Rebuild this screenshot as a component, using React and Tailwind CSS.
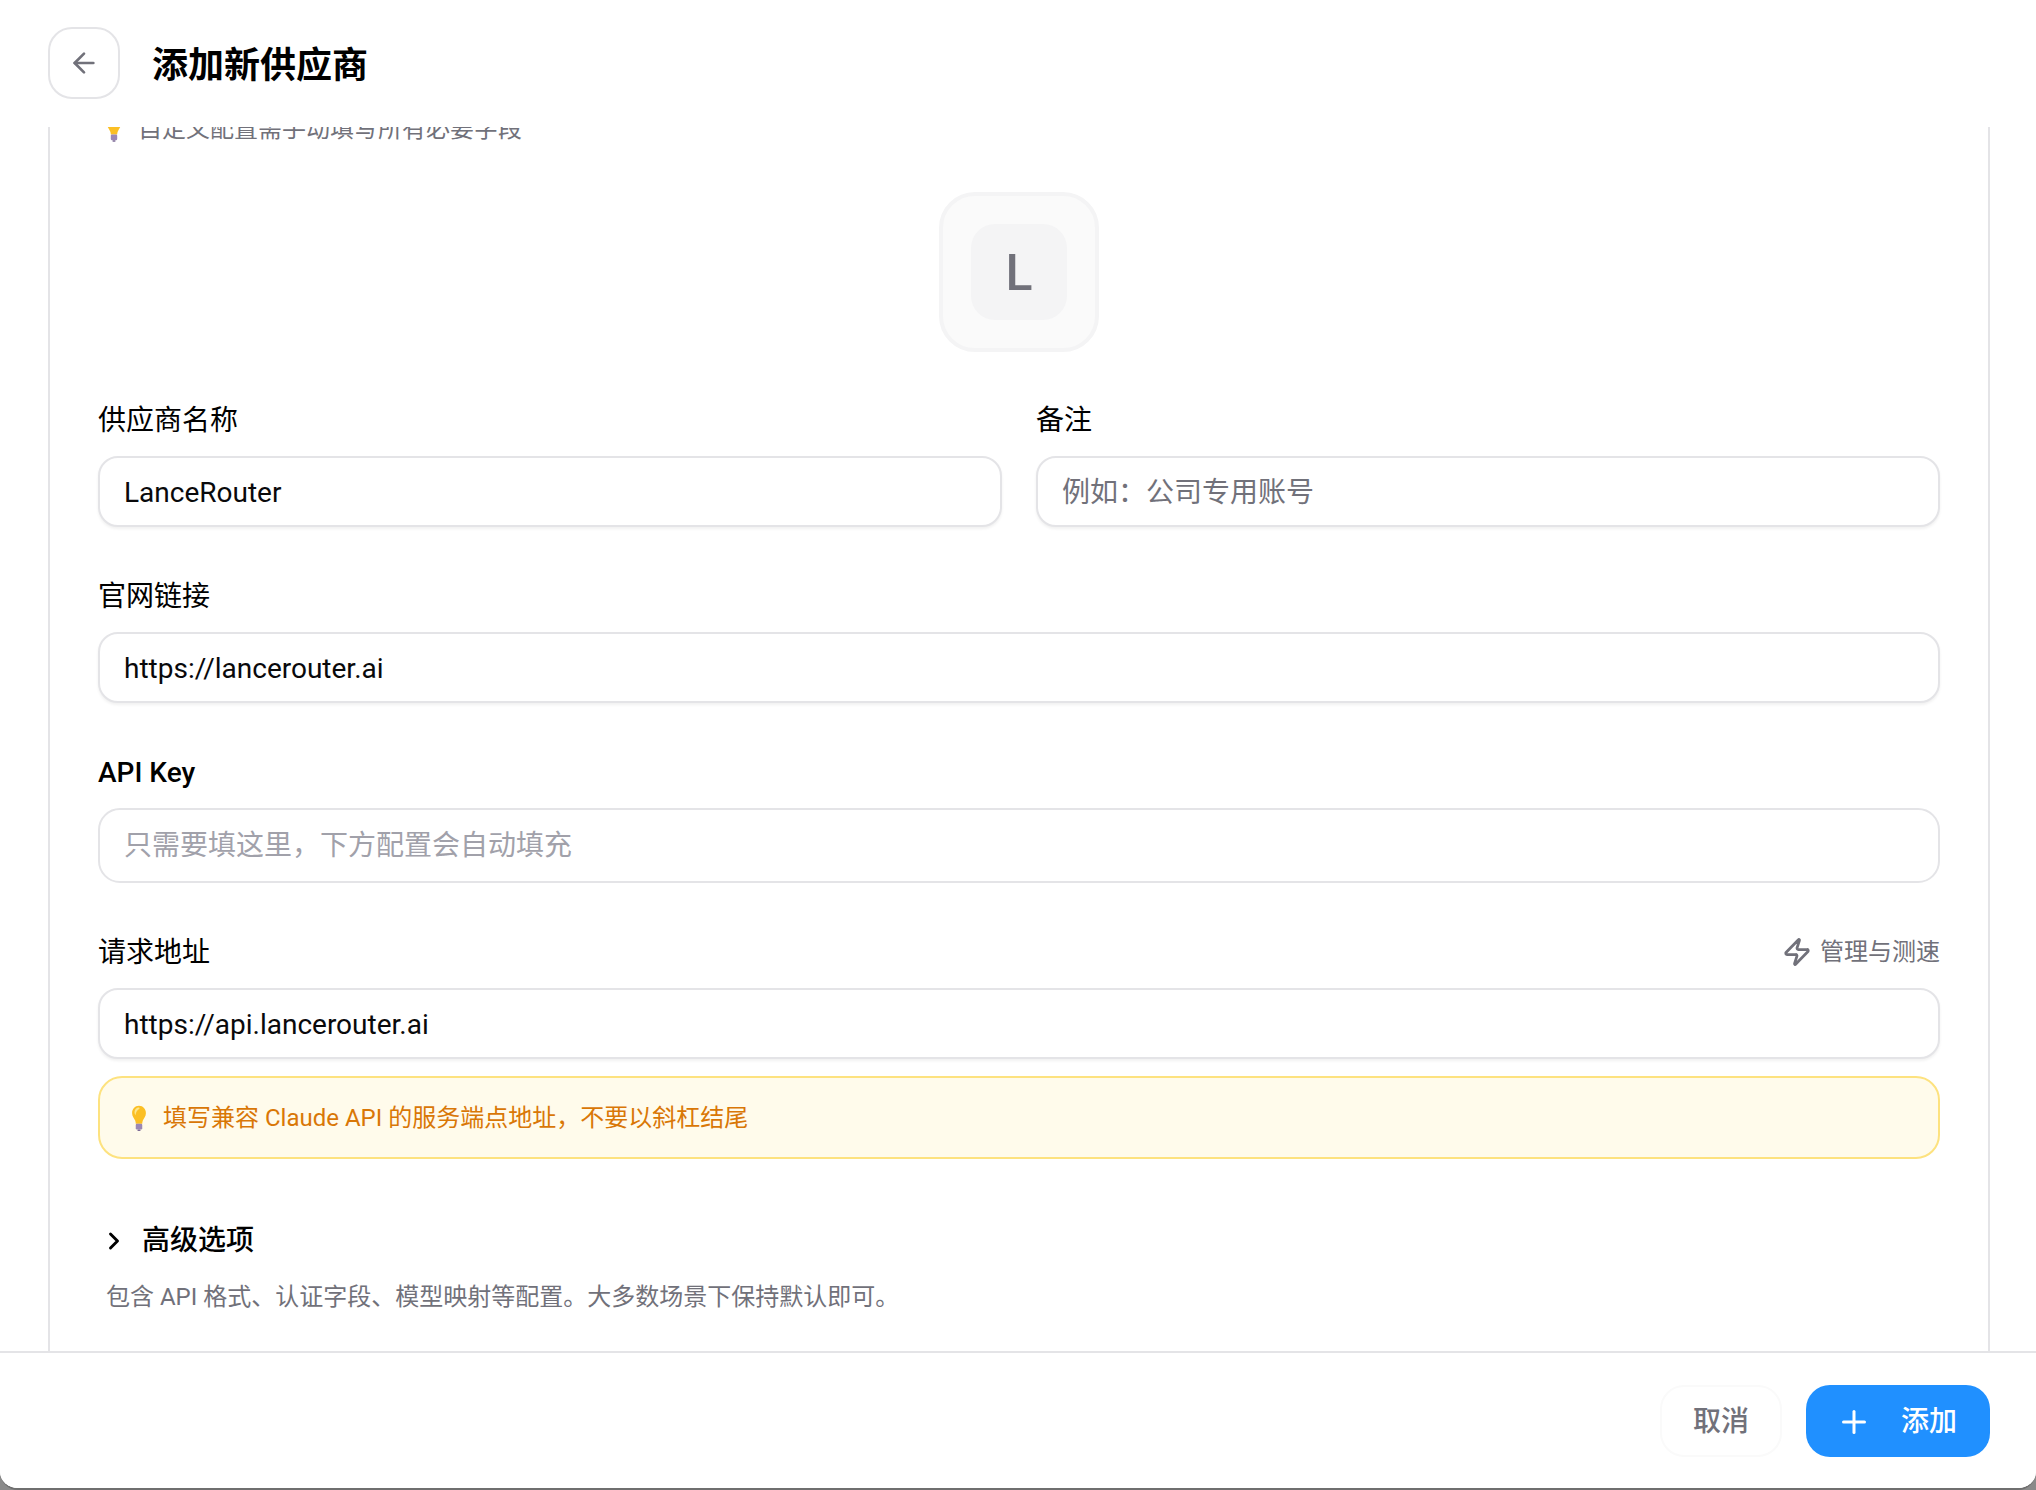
import { ArrowLeft, ChevronRight, Plus, Zap } from 'lucide-react';

const cjk = 'font-["Roboto","Noto_Sans_CJK_SC",sans-serif]';

function Bulb({ className }) {
  return (
    <svg viewBox="0 0 20 32" className={className}>
      <path d="M10 1C5 1 1.5 5 1.5 10c0 4 2.6 6.2 3.8 9.2.5 1.300.7 2.800.7 3.800h8c0-1 .2-2.500.7-3.800C15.900 16.200 18.500 14 18.500 10 18.500 5 15 1 10 1z" fill="#fbbf24" />
      <path d="M10 3c-3 0-5.500 2.500-5.500 6 0 1.500.6 2.700 1.300 3.500C6 9 7.500 6 10.500 4.500 11 4 10.500 3 10 3z" fill="#fde68a" />
      <rect x="6" y="23" width="8" height="7" rx="1.500" fill="#9b87b5" />
      <rect x="8" y="30" width="4" height="2" rx="1" fill="#7c6a96" />
    </svg>
  );
}

function Field({ label, value, placeholder }) {
  return (
    <div>
      <label className="block h-[40px] pt-[1px] text-[28px] leading-[40px] font-normal text-black">{label}</label>
      <div className="mt-[16px] h-[71px] rounded-[20px] border-2 border-[#e4e4e7] bg-white px-[24px] flex items-center text-[28px] shadow-[0_2px_3px_rgba(0,0,0,0.06)]">
        {value ? <span className="pt-[2px] text-[#09090b]">{value}</span> : <span className="pt-[2px] text-[#71717a]">{placeholder}</span>}
      </div>
    </div>
  );
}

export default function App() {
  return (
    <div className={`h-[1490px] w-[2036px] overflow-hidden bg-[#8a8a8a] ${cjk}`}>
      <div className="h-full flex flex-col overflow-hidden bg-white rounded-b-[18px] border-b-2 border-[#6f6f6f]">
        {/* Header */}
        <div className="h-[127px] shrink-0 pl-[48px] pt-[27px] flex items-start gap-[32px]">
          <button className="h-[72px] w-[72px] rounded-[24px] border-2 border-[#e4e4e7] bg-white flex items-center justify-center text-[#71717a]">
            <ArrowLeft size={32} strokeWidth={2} />
          </button>
          <h1 className="h-[72px] pt-[3px] leading-[72px] text-[36px] font-bold text-black">添加新供应商</h1>
        </div>

        {/* Scrolled content */}
        <div className="flex-1 min-h-0 overflow-hidden">
          <div className="-mt-[15px] ml-[48px] w-[1942px] h-[1300px] border-x-2 border-[#e4e4e7] px-[48px]">
            <div className="flex items-center gap-[16px] h-[34px] text-[24px] leading-[34px] text-[#71717a]">
              <Bulb className="h-[26px] w-[16px] ml-[8px] shrink-0" />
              <span>自定义配置需手动填写所有必要字段</span>
            </div>

            <div className="mt-[46px] flex justify-center">
              <div className="h-[160px] w-[160px] rounded-[36px] border-4 border-[#f4f4f5] bg-[#fafafa] flex items-center justify-center">
                <div className="h-[96px] w-[96px] rounded-[24px] bg-[#f4f4f5] flex items-center justify-center pt-[3px] text-[50px] font-medium text-[#71717a]">L</div>
              </div>
            </div>

            <div className="mt-[48px] grid grid-cols-2 gap-x-[34px]">
              <Field label="供应商名称" value="LanceRouter" />
              <Field label="备注" placeholder="例如：公司专用账号" />
            </div>

            <div className="mt-[49px]">
              <Field label="官网链接" value="https://lancerouter.ai" />
            </div>

            <div className="mt-[50px]">
              <label className="block h-[40px] text-[28px] leading-[40px] font-medium text-black">API Key</label>
              <div className="mt-[15px] h-[75px] rounded-[22px] border-2 border-[#e4e4e7] bg-white px-[24px] pt-[1px] flex items-center text-[28px] text-[#a1a1aa]">
                只需要填这里，下方配置会自动填充
              </div>
            </div>

            <div className="mt-[49px]">
              <div className="flex h-[40px] items-center justify-between">
                <label className="pt-[1px] text-[28px] font-normal leading-[40px] text-black">请求地址</label>
                <span className="flex items-center gap-[8px] text-[24px] text-[#71717a]">
                  <Zap size={30} strokeWidth={2.200} />
                  管理与测速
                </span>
              </div>
              <div className="mt-[16px] h-[71px] rounded-[20px] border-2 border-[#e4e4e7] bg-white px-[24px] flex items-center text-[28px] text-[#09090b] shadow-[0_2px_3px_rgba(0,0,0,0.06)]">
                <span className="pt-[2px]">https://api.lancerouter.ai</span>
              </div>
              <div className="mt-[17px] h-[83px] rounded-[24px] border-2 border-[#fde27f] bg-[#fffbeb] pl-[30px] flex items-center gap-[15px] text-[24px] text-[#d97706]">
                <Bulb className="h-[26px] w-[18px] shrink-0" />
                填写兼容 Claude API 的服务端点地址，不要以斜杠结尾
              </div>
            </div>

            <div className="mt-[62px] flex items-center gap-[14px] pl-[2px] h-[40px] text-[28px] font-medium text-black">
              <ChevronRight size={28} strokeWidth={2.500} />
              高级选项
            </div>
            <p className="mt-[19px] pl-[8px] text-[24px] leading-[34px] text-[#71717a]">包含 API 格式、认证字段、模型映射等配置。大多数场景下保持默认即可。</p>
          </div>
        </div>

        {/* Footer */}
        <div className="h-[137px] shrink-0 border-t-2 border-[#e4e4e7] bg-white pr-[46px] pt-[32px] flex items-start justify-end gap-[24px]">
          <button className="h-[72px] w-[122px] rounded-[24px] border-2 border-[#fafafa] bg-white pt-[1px] text-[28px] font-medium text-[#71717a]">取消</button>
          <button className="h-[72px] w-[184px] rounded-[24px] bg-[#2090ff] flex items-center pl-[30px] pt-[1px] gap-[29px] text-[28px] font-medium text-white">
            <Plus size={36} strokeWidth={2} />
            添加
          </button>
        </div>
      </div>
    </div>
  );
}
